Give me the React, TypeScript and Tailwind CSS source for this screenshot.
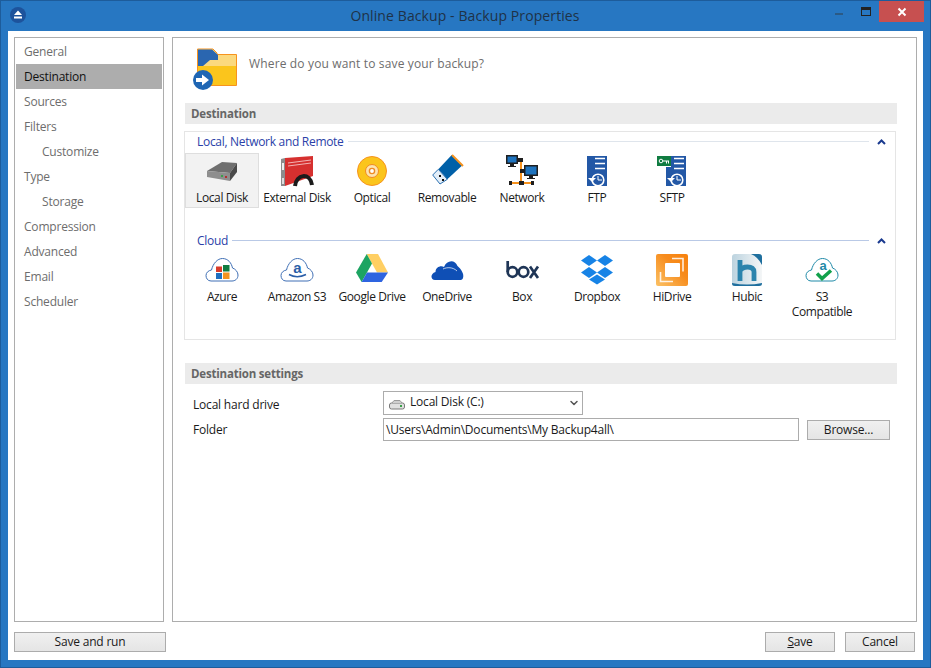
import { ChevronDown } from 'lucide-react'
import type { ReactNode } from 'react'

const font = { fontFamily: '"Open Sans", "Noto Sans", sans-serif' }

function Svg({ children, w = 40, h = 32 }: { children: ReactNode; w?: number; h?: number }) {
    return (
        <svg width={w} height={h} viewBox={`0 0 ${w} ${h}`} className="overflow-visible">
            {children}
        </svg>
    )
}

const cloudPath = 'M9 27 C5.5 27 4 24 4 21.5 C4 18.5 6.5 16.5 9.5 16 C11 9.5 15.5 4.5 20.5 4.5 C26 4.5 29.5 9 30.5 14 C33.5 15 36 18 36 21 C36 25 33 27 30 27 Z'

function CloudOutline({ stroke = '#3f6fb5' }: { stroke?: string }) {
    return <path d={cloudPath} fill="#fff" stroke={stroke} strokeWidth="1" />
}

const LocalDisk = () => (
    <Svg>
        <path d="M5 16 L20 7 L35 8 L28 18 Z" fill="#6f6f6f" />
        <path d="M5 16 L28 18 L28 26 L5 22 Z" fill="#8e8e8e" />
        <path d="M28 18 L35 8 L35 17 L28 26 Z" fill="#4a4a4a" />
        <rect x="19" y="20" width="2" height="2" fill="#3aa04a" />
        <rect x="23" y="21" width="2" height="2" fill="#b33030" />
    </Svg>
)

const ExternalDisk = () => (
    <Svg>
        <path d="M8 3 L36 1 L36 21 L8 31 Z" fill="#d6302f" />
        <path d="M4 4 L8 3 L8 31 L4 31 Z" fill="#8c8c8c" />
        <rect x="5" y="8" width="2" height="7" fill="#eee" />
        <rect x="5" y="23" width="2" height="6" fill="#ddd" />
        <path d="M11 8 L34 5 M11 11 L34 8" stroke="#f3b3b3" strokeWidth="1" />
        <path d="M18 31 C19 19 33 17 35 30" stroke="#1b1b1b" strokeWidth="4" fill="none" />
    </Svg>
)

const Optical = () => (
    <Svg>
        <circle cx="20" cy="16" r="14.5" fill="#fbc51c" stroke="#f7931e" strokeWidth="1" />
        <circle cx="20" cy="16" r="6.5" fill="#fde4b0" stroke="#f08a24" strokeWidth="1" />
        <circle cx="20" cy="16" r="2.6" fill="#fff" stroke="#f08a24" strokeWidth="1.4" />
    </Svg>
)

const Removable = () => (
    <Svg>
        <path d="M24.7 0 L35.7 10 L20.3 24.3 L11.3 14.3 Z" fill="#0060a8" />
        <path d="M25 0 L36 11" stroke="#f7931e" strokeWidth="2" />
        <path d="M11.3 14.3 L20.3 24.3 L13 29 L5.7 20 Z" fill="#e3eef8" stroke="#2a6fb0" strokeWidth="1" />
        <rect x="12" y="20" width="2" height="2" fill="#111" />
        <rect x="15" y="24" width="2" height="2" fill="#111" />
    </Svg>
)

const Monitor = ({ x, y, s = 12 }: { x: number; y: number; s?: number }) => (
    <g transform={`translate(${x} ${y})`}>
        <rect width={s} height={s - 3} fill="#1f1f1f" />
        <rect x="1.5" y="1.5" width={s - 3} height={s - 6} fill="#1e73be" />
        <path d={`M${s / 2 - 2} ${s - 3} H${s / 2 + 2} V${s - 1} H${s / 2 + 4} V${s} H${s / 2 - 4} V${s - 1} H${s / 2 - 2} Z`} fill="#1f1f1f" />
    </g>
)

const Network = () => (
    <Svg>
        <path d="M16 5 H19 V28 M8 28 H31 M19 16 H22" stroke="#f7931e" strokeWidth="2" fill="none" />
        <rect x="16" y="3" width="5" height="4" fill="#1f1f1f" />
        <rect x="18" y="14" width="4" height="4" fill="#1f1f1f" />
        <rect x="7" y="26" width="3" height="4" fill="#1f1f1f" />
        <rect x="17" y="26" width="5" height="4" fill="#1f1f1f" />
        <rect x="29" y="26" width="3" height="4" fill="#1f1f1f" />
        <Monitor x={4} y={0} />
        <Monitor x={22} y={10} s={14} />
    </Svg>
)

const RestoreMark = ({ x, y }: { x: number; y: number }) => (
    <g>
        <circle cx={x + 11} cy={y + 24} r="5.8" fill="none" stroke="#fff" strokeWidth="1.6" />
        <path d={`M${x + 11} ${y + 20} V${y + 24} H${x + 15}`} fill="none" stroke="#fff" strokeWidth="1" />
        <path d={`M${x + 1} ${y + 22} H${x + 9} L${x + 5} ${y + 26} Z`} fill="#fff" />
    </g>
)

const Ftp = () => (
    <Svg>
        <rect x="10" y="1" width="20" height="30" fill="#2358a6" />
        <path d="M18 3.5 H28 M18 8.5 H28 M18 13.5 H28" stroke="#fff" strokeWidth="1.6" />
        <RestoreMark x={10} y={1} />
    </Svg>
)

const Sftp = () => (
    <Svg>
        <path d="M19 1 H34 V31 H14 V12 H19 Z" fill="#2358a6" />
        <path d="M22 3.5 H32 M22 8.5 H32 M22 13.5 H32" stroke="#fff" strokeWidth="1.6" />
        <RestoreMark x={14} y={1} />
        <rect x="5" y="1" width="14" height="10" fill="#107c41" />
        <circle cx="9" cy="6" r="1.8" fill="none" stroke="#fff" />
        <path d="M11 6 H17 M14.5 6 V8.5 M16.5 6 V8.5" stroke="#fff" />
    </Svg>
)

const Azure = () => (
    <Svg>
        <CloudOutline />
        <rect x="14" y="12.5" width="6" height="5.5" fill="#d83b2b" />
        <rect x="21" y="11" width="6.5" height="6.5" fill="#107c41" />
        <rect x="14" y="19" width="6" height="6" fill="#1f6fc0" />
        <rect x="21" y="18.5" width="6.5" height="6.5" fill="#f59321" />
    </Svg>
)

const AmazonS3 = () => (
    <Svg>
        <CloudOutline />
        <text x="20.5" y="19" textAnchor="middle" fontSize="15" fontWeight="700" fill="#2b5fa8" fontFamily="Liberation Sans, sans-serif">a</text>
        <path d="M12 20.5 Q20 25 29 20.5" stroke="#2b5fa8" strokeWidth="1.5" fill="none" />
    </Svg>
)

const GoogleDrive = () => (
    <Svg>
        <path d="M14.7 0 H26 L36 18.6 H25 Z" fill="#ffcf63" />
        <path d="M14.7 0 L20 9.5 L9.6 28 L4 18.6 Z" fill="#1da462" />
        <path d="M15 18.6 H36 L29.7 28 H9.6 Z" fill="#2e64e0" />
    </Svg>
)

const OneDrive = () => (
    <Svg>
        <path d="M8 26 C3.5 26 3 19.5 8.5 18 C8.5 13 14 11 17 13 C19.5 6 28 5 30.5 12 C34 15 37.5 20 36 24 C35.5 25.5 34.5 26 33 26 Z" fill="#0f4fb5" />
        <path d="M16 15 C20 13 26 13 30 17" stroke="#fff" strokeWidth="0.7" fill="none" />
    </Svg>
)

const BoxLogo = () => (
    <Svg>
        <g fill="none" stroke="#1f3556" strokeWidth="2.7">
            <circle cx="10.5" cy="18" r="4.8" />
            <path d="M5.7 7 V18" />
            <circle cx="21.5" cy="18" r="4.8" />
            <path d="M28 12.5 L36 24 M36 12.5 L28 24" />
        </g>
    </Svg>
)

const Dropbox = () => (
    <Svg>
        <g fill="#1783e6">
            <path d="M12 1 L20 6.5 L12 12 L4 6.5 Z" />
            <path d="M28 1 L36 6.5 L28 12 L20 6.5 Z" />
            <path d="M12 13 L20 18.5 L12 24 L4 18.5 Z" />
            <path d="M28 13 L36 18.5 L28 24 L20 18.5 Z" />
            <path d="M20 20.5 L28 25.5 L20 30.5 L12 25.5 Z" />
        </g>
    </Svg>
)

const HiDrive = () => (
    <Svg>
        <defs>
            <linearGradient id="hi" x1="0" y1="1" x2="1" y2="0">
                <stop offset="0" stopColor="#fbc164" />
                <stop offset="0.6" stopColor="#f78c1d" />
                <stop offset="1" stopColor="#f7810d" />
            </linearGradient>
        </defs>
        <rect x="4" y="0" width="32" height="32" rx="2" fill="url(#hi)" />
        <rect x="13" y="9" width="15" height="14" rx="1" fill="#fff" />
        <path d="M20 4.5 H31 V17.5 M21 27.5 H8.5 V18" stroke="#fff" strokeWidth="1.6" fill="none" opacity="0.85" />
    </Svg>
)

const Hubic = () => (
    <Svg>
        <defs>
            <linearGradient id="hub" x1="0" y1="0" x2="1" y2="0">
                <stop offset="0" stopColor="#bcd3df" />
                <stop offset="1" stopColor="#f4f6f7" />
            </linearGradient>
        </defs>
        <rect x="5" y="0" width="30" height="32" rx="3" fill="url(#hub)" />
        <path d="M24 0 H32 Q35 0 35 3 V11 Q31 3 24 0 Z" fill="#1f6f9e" />
        <path d="M5 29 Q20 32 35 29 V29.5 Q35 32 32 32 H8 Q5 32 5 29.5 Z" fill="#1f6f9e" />
        <path d="M13 6 V27 M13 17 Q15 13 20.5 13 Q27 13 27 18 V27" stroke="#2b84ad" strokeWidth="4.8" fill="none" />
    </Svg>
)

const S3Compatible = () => (
    <Svg>
        <CloudOutline stroke="#1f8aa8" />
        <text x="21" y="15.5" textAnchor="middle" fontSize="13" fontWeight="700" fill="#1f8aa8" fontFamily="Liberation Sans, sans-serif">a</text>
        <path d="M15 19.5 L20 24.5 L29 16.5" stroke="#12a14b" strokeWidth="3.5" fill="none" />
    </Svg>
)

const localTiles = [
    { label: 'Local Disk', icon: <LocalDisk /> },
    { label: 'External Disk', icon: <ExternalDisk /> },
    { label: 'Optical', icon: <Optical /> },
    { label: 'Removable', icon: <Removable /> },
    { label: 'Network', icon: <Network /> },
    { label: 'FTP', icon: <Ftp /> },
    { label: 'SFTP', icon: <Sftp /> },
]

const cloudTiles = [
    { label: 'Azure', icon: <Azure /> },
    { label: 'Amazon S3', icon: <AmazonS3 /> },
    { label: 'Google Drive', icon: <GoogleDrive /> },
    { label: 'OneDrive', icon: <OneDrive /> },
    { label: 'Box', icon: <BoxLogo /> },
    { label: 'Dropbox', icon: <Dropbox /> },
    { label: 'HiDrive', icon: <HiDrive /> },
    { label: 'Hubic', icon: <Hubic /> },
    { label: 'S3\nCompatible', icon: <S3Compatible /> },
]

const navItems = [
    { label: 'General' },
    { label: 'Destination', active: true },
    { label: 'Sources' },
    { label: 'Filters' },
    { label: 'Customize', sub: true },
    { label: 'Type' },
    { label: 'Storage', sub: true },
    { label: 'Compression' },
    { label: 'Advanced' },
    { label: 'Email' },
    { label: 'Scheduler' },
]

function Tile({ label, icon, selected }: { label: string; icon: ReactNode; selected?: boolean }) {
    return (
        <div
            className={`w-[74px] mr-[1px] shrink-0 flex flex-col items-center border ${selected ? 'bg-[#f2f2f2] border-[#dedede]' : 'border-transparent'}`}
        >
            <div className="h-[32px] mt-[1px] flex items-center justify-center">{icon}</div>
            <div className="text-[12px] leading-[15px] text-center text-[#1a1a1a] mt-[3px] mb-[2px] whitespace-pre tracking-[-0.4px]">{label}</div>
        </div>
    )
}

function GroupHeader({ title, line }: { title: string; line: string }) {
    return (
        <div className="flex items-center h-[21px] pl-[12px] pr-[9px] gap-[4px]">
            <span className="text-[12px] text-[#2b3fa8] whitespace-nowrap tracking-[-0.3px] -mt-[1px]">{title}</span>
            <div className={`flex-1 h-px -mt-[2px] ${line}`} />
            <svg width="9" height="6" viewBox="0 0 9 6" className="ml-[4px] -mt-[1px]">
                <path d="M1 5 L4.5 1.5 L8 5" stroke="#1a3a8f" strokeWidth="2" fill="none" />
            </svg>
        </div>
    )
}

function SectionBar({ title }: { title: string }) {
    return (
        <div className="ml-[1px] w-[712px] h-[21px] bg-[#ebebeb] flex items-center pl-[6px] text-[11.5px] font-bold text-[#666666] tracking-[-0.2px]">
            {title}
        </div>
    )
}

function Button({ children, className }: { children: ReactNode; className: string }) {
    return (
        <div
            className={`h-[20px] flex items-center justify-center border border-[#acacac] bg-gradient-to-b from-[#f0f0f0] to-[#e5e5e5] text-[12px] text-[#1a1a1a] tracking-[-0.2px] ${className}`}
        >
            {children}
        </div>
    )
}

export default function App() {
    return (
        <div style={font} className="w-[931px] h-[668px] flex flex-col bg-[#2777c2] border border-[#1d5c9b] overflow-hidden">
            {/* title bar */}
            <div className="h-[30px] flex items-start shrink-0">
                <svg width="16" height="16" viewBox="0 0 16 16" className="ml-[9px] mt-[6px]">
                    <circle cx="8" cy="8" r="8" fill="#1d539c" />
                    <path d="M8 3.5 L12 8 H4 Z M4 9.5 H12 V11.5 H4 Z" fill="#fff" />
                </svg>
                <div className="flex-1 text-center text-[14px] text-[#1f3247] mt-[4px] pl-[69px] tracking-[0.1px]">
                    Online Backup - Backup Properties
                </div>
                <div className="w-[8px] h-[2px] bg-[#2b5a85] mt-[12px]" />
                <div className="w-[10px] h-[9px] border border-[#222] border-t-[3px] ml-[18px] mt-[6px]" />
                <div className="w-[45px] h-[21px] bg-[#c75050] ml-[8px] mr-[6px] flex items-center justify-center">
                    <svg width="10" height="10" viewBox="0 0 10 10">
                        <path d="M1.5 1.5 L8.5 8.5 M8.5 1.5 L1.5 8.5" stroke="#fff" strokeWidth="2" />
                    </svg>
                </div>
            </div>

            {/* client area */}
            <div className="flex-1 mx-[7px] mb-[7px] bg-white p-[6px] flex flex-col min-h-0">
                <div className="flex-1 flex gap-[8px] min-h-0">
                    <div className="w-[150px] border border-[#adadad] p-[1px]">
                        {navItems.map((item) => (
                            <div
                                key={item.label}
                                className={`h-[25px] flex items-center text-[12px] tracking-[-0.2px] ${item.sub ? 'pl-[26px]' : 'pl-[8px]'} ${item.active ? 'bg-[#adadad] text-[#111]' : 'text-[#6d6d6d]'}`}
                            >
                                {item.label}
                            </div>
                        ))}
                    </div>

                    <div className="flex-1 border border-[#adadad] pl-[11px] flex flex-col">
                        <div className="flex items-center h-[65px] shrink-0">
                            <svg width="48" height="48" viewBox="0 0 48 48" className="ml-[8px]">
                                <path d="M5.5 2 H21 L25 6 V7.5 H44.5 V38.5 H5.5 Z" fill="#fbd97e" stroke="#f7931e" strokeWidth="1" />
                                <path d="M6 19 H44 V38 H6 Z" fill="#fbc51c" />
                                <path d="M6 2.5 H20 L26 8 V13 H18 L11 19 H6 Z" fill="#2a66b0" />
                                <circle cx="11" cy="33" r="10" fill="#1f66b4" />
                                <path d="M4 31 H10 V27.5 L17 33 L10 38.5 V35 H4 Z" fill="#fff" />
                            </svg>
                            <span className="ml-[9px] -mt-[13px] text-[12px] text-[#6d6d6d] tracking-[0.15px]">Where do you want to save your backup?</span>
                        </div>

                        <SectionBar title="Destination" />

                        <div className="mt-[7px] w-[712px] h-[209px] border border-[#e5e5e5] shrink-0 flex flex-col">
                            <GroupHeader title="Local, Network and Remote" line="bg-[#dfe5ec]" />
                            <div className="flex items-start">
                                {localTiles.map((t, i) => (
                                    <Tile key={t.label} label={t.label} icon={t.icon} selected={i === 0} />
                                ))}
                            </div>
                            <div className="mt-[23px]">
                                <GroupHeader title="Cloud" line="bg-[#b9c9e6]" />
                            </div>
                            <div className="flex items-start">
                                {cloudTiles.map((t) => (
                                    <Tile key={t.label} label={t.label} icon={t.icon} />
                                ))}
                            </div>
                        </div>

                        <div className="mt-[23px]">
                            <SectionBar title="Destination settings" />
                        </div>

                        <div className="flex items-center mt-[7px] pl-[9px]">
                            <span className="w-[190px] text-[12px] text-[#1a1a1a] mt-[3px] tracking-[-0.2px]">Local hard drive</span>
                            <div className="w-[200px] h-[24px] border border-[#acacac] flex items-center pl-[5px] pr-[2px] text-[12px] text-[#1a1a1a] tracking-[-0.2px]">
                                <svg width="16" height="10" viewBox="0 0 16 10" className="mt-[4px]">
                                    <rect x="0.5" y="3" width="15" height="6" rx="2" fill="#e0e0e0" stroke="#7a7a7a" />
                                    <path d="M3 3 L5 0.5 H11 L13 3" fill="#cfcfcf" stroke="#9a9a9a" />
                                    <rect x="11" y="5" width="2" height="2" fill="#3aa04a" />
                                </svg>
                                <span className="ml-[5px] flex-1 -mt-[2px]">Local Disk (C:)</span>
                                <ChevronDown size={12} strokeWidth={3} className="text-[#555]" />
                            </div>
                        </div>

                        <div className="flex items-center mt-[3px] pl-[9px]">
                            <span className="w-[190px] text-[12px] text-[#1a1a1a] tracking-[-0.2px]">Folder</span>
                            <div className="w-[416px] h-[23px] border border-[#acacac] flex items-center pl-[2px] text-[12px] text-[#1a1a1a] tracking-[-0.2px]">
                                {'\\Users\\Admin\\Documents\\My Backup4all\\'}
                            </div>
                            <Button className="w-[83px] ml-[8px]">Browse...</Button>
                        </div>
                    </div>
                </div>

                {/* footer */}
                <div className="h-[20px] mt-[10px] mb-[2px] flex justify-between pr-[2px] shrink-0">
                    <Button className="w-[152px]">Save and run</Button>
                    <div className="flex gap-[10px]">
                        <Button className="w-[70px]">
                            <span>
                                <u>S</u>ave
                            </span>
                        </Button>
                        <Button className="w-[70px]">Cancel</Button>
                    </div>
                </div>
            </div>
        </div>
    )
}
